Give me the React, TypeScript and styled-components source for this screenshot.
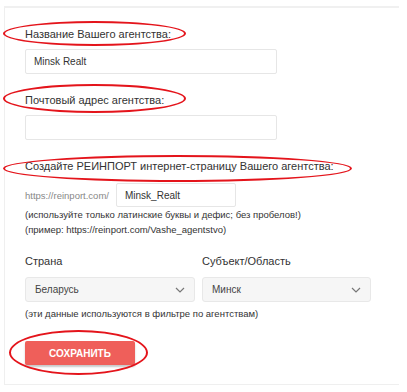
import styled, { createGlobalStyle } from "styled-components";

const GlobalStyle = createGlobalStyle`
  body {
    margin: 0;
    background: #fff;
    font-family: "Liberation Sans", Arial, sans-serif;
    color: #333;
  }
`;

function Chevron() {
  return (
    <svg width="10" height="6" viewBox="0 0 10 6">
      <path d="M1 1l4 4 4-4" fill="none" stroke="#777" strokeWidth="1.2" />
    </svg>
  );
}

export default function App() {
  return (
    <>
      <GlobalStyle />
      <Panel>
        <Label ring={{ top: -4, height: 25, width: 183 }}>Название Вашего агентства:</Label>
        <TextInput w={252} defaultValue="Minsk Realt" />

        <Label ring={{ top: -7, height: 29, width: 183 }}>Почтовый адрес агентства:</Label>
        <TextInput w={252} defaultValue="" />

        <Label ring={{ top: -2, height: 27, width: 349 }}>
          Создайте РЕИНПОРТ интернет-страницу Вашего агентства:
        </Label>
        <UrlRow>
          <UrlPrefix>https://reinport.com/</UrlPrefix>
          <TextInput w={120} defaultValue="Minsk_Realt" />
        </UrlRow>
        <Hint>(используйте только латинские буквы и дефис; без пробелов!)</Hint>
        <Hint>(пример: https://reinport.com/Vashe_agentstvo)</Hint>

        <SelectGrid>
          <SelectLabel>Страна</SelectLabel>
          <SelectLabel>Субъект/Область</SelectLabel>
          <SelectBox>
            <span>Беларусь</span>
            <Chevron />
          </SelectBox>
          <SelectBox>
            <span>Минск</span>
            <Chevron />
          </SelectBox>
        </SelectGrid>
        <Note>(эти данные используются в фильтре по агентствам)</Note>

        <SaveWrap>
          <SaveButton>СОХРАНИТЬ</SaveButton>
        </SaveWrap>
      </Panel>
    </>
  );
}

type Ring = { top: number; height: number; width: number };

const Panel = styled.div`
  margin: 6px 0 0 4px;
  width: 374px;
  height: 359px;
  padding: 17px 0 0 20px;
  border-left: 1px solid #efefef;
  border-top: 2px solid #f0f0f0;
  border-bottom: 1px solid #efefef;
  display: flex;
  flex-direction: column;
  align-items: flex-start;
`;

const Label = styled.div<{ ring: Ring }>`
  position: relative;
  font-size: 11px;
  line-height: 18px;
  color: #333;
  margin-bottom: ${(p) => (p.ring.width > 300 ? 8 : 6)}px;

  &::before {
    content: "";
    position: absolute;
    left: -22px;
    top: ${(p) => p.ring.top}px;
    width: ${(p) => p.ring.width}px;
    height: ${(p) => p.ring.height}px;
    border: 2px solid #e4141b;
    border-radius: 50%;
    box-sizing: border-box;
  }
`;

const TextInput = styled.input<{ w: number }>`
  box-sizing: border-box;
  width: ${(p) => p.w}px;
  height: 25px;
  margin: 0 0 17px;
  padding: 0 8px;
  border: 1px solid #e6e6e6;
  border-radius: 2px;
  background: #fff;
  font-family: "Liberation Sans", Arial, sans-serif;
  font-size: 10px;
  color: #333;
  outline: none;
`;

const UrlRow = styled.div`
  display: flex;
  align-items: center;
  gap: 7px;

  ${TextInput} {
    margin: 0;
    height: 24px;
  }
`;

const UrlPrefix = styled.span`
  font-size: 9.5px;
  color: #888;
  width: 84px;
  white-space: nowrap;
`;

const Hint = styled.div`
  font-size: 9.5px;
  line-height: 15px;
  color: #333;
`;

const SelectGrid = styled.div`
  margin-top: 15px;
  display: grid;
  grid-template-columns: 170px 169px;
  column-gap: 7px;
  row-gap: 7px;
`;

const SelectLabel = styled.div`
  font-size: 11px;
  line-height: 18px;
  color: #333;
`;

const SelectBox = styled.div`
  box-sizing: border-box;
  height: 25px;
  padding: 0 9px;
  display: flex;
  align-items: center;
  justify-content: space-between;
  background: #f6f6f6;
  border: 1px solid #e8e8e8;
  border-radius: 3px;
  font-size: 10px;
  color: #444;
`;

const Note = styled.div`
  margin-top: 4px;
  font-size: 9.5px;
  line-height: 15px;
  color: #333;
`;

const SaveWrap = styled.div`
  position: relative;
  margin-top: 20px;

  &::before {
    content: "";
    position: absolute;
    left: -16px;
    top: -11px;
    width: 139px;
    height: 45px;
    border: 2px solid #e4141b;
    border-radius: 50%;
    box-sizing: border-box;
  }
`;

const SaveButton = styled.button`
  width: 110px;
  height: 24px;
  border: none;
  border-radius: 2px;
  background: #ef5f5a;
  box-shadow: 0 2px 2px rgba(0, 0, 0, 0.22);
  color: #fff;
  font-family: "Liberation Sans", Arial, sans-serif;
  font-size: 10px;
  font-weight: bold;
  cursor: pointer;
`;
